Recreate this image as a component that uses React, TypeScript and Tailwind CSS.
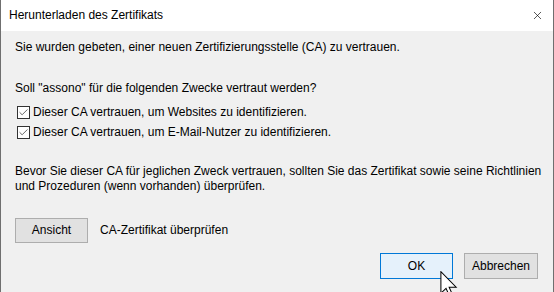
import { Check, X } from "lucide-react";

function CheckRow({ label }: { label: string }) {
  return (
    <div className="flex h-[20px] items-center">
      <span className="ml-[2px] flex h-[13px] w-[13px] items-center justify-center border border-[#333333] bg-white">
        <Check size={11} strokeWidth={1.6} className="text-[#333333]" />
      </span>
      <span className="ml-[3px]">{label}</span>
    </div>
  );
}

export default function App() {
  return (
    <div className="relative h-[292px] w-[554px] overflow-hidden bg-[#f0f0f0] font-['Liberation_Sans',sans-serif] text-[12px] leading-[15px] text-black">
      <div className="flex h-full flex-col border-x border-[#6f6f6f]">
        {/* Title bar */}
        <div className="flex h-[31px] items-center justify-between bg-white pl-[8px] pr-[9px]">
          <span>Herunterladen des Zertifikats</span>
          <X size={13} strokeWidth={1.2} className="text-black" />
        </div>

        {/* Body */}
        <div className="flex flex-1 flex-col pl-[14px] pr-[14px] pt-[9px]">
          <p>Sie wurden gebeten, einer neuen Zertifizierungsstelle (CA) zu vertrauen.</p>

          <p className="mt-[26px]">Soll "assono" für die folgenden Zwecke vertraut werden?</p>
          <div className="mt-[6px]">
            <CheckRow label="Dieser CA vertrauen, um Websites zu identifizieren." />
            <CheckRow label="Dieser CA vertrauen, um E-Mail-Nutzer zu identifizieren." />
          </div>

          <p className="mt-[22px] whitespace-nowrap">
            Bevor Sie dieser CA für jeglichen Zweck vertrauen, sollten Sie das Zertifikat sowie seine Richtlinien
            <br />
            und Prozeduren (wenn vorhanden) überprüfen.
          </p>

          <div className="mt-[24px] flex items-center">
            <button className="h-[25px] w-[73px] border border-[#adadad] bg-[#e1e1e1]">Ansicht</button>
            <span className="ml-[12px]">CA-Zertifikat überprüfen</span>
          </div>

          <div className="mt-[10px] flex justify-end gap-[11px] pr-[1px]">
            <button className="h-[26px] w-[73px] border border-[#0078d7] bg-[#e5f1fb]">OK</button>
            <button className="h-[26px] w-[74px] border border-[#adadad] bg-[#e1e1e1]">Abbrechen</button>
          </div>
        </div>
      </div>

      {/* Mouse cursor */}
      <svg
        className="absolute left-[440px] top-[271px]"
        width="18"
        height="27"
        viewBox="0 0 13 20"
      >
        <path
          d="M0.5 0.5 L0.5 16.5 L4.3 12.8 L7 19 L9.3 18 L6.6 12 L11.8 12 Z"
          fill="white"
          stroke="black"
          strokeWidth="0.75"
          strokeLinejoin="miter"
        />
      </svg>
    </div>
  );
}
